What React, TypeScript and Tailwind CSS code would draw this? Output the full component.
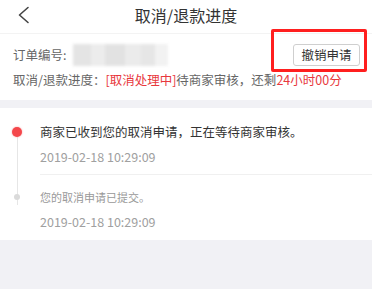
import React from 'react';

const FONT = { fontFamily: '"Noto Sans CJK SC", "Noto Sans", sans-serif' };

export default function App() {
  return (
    <div className="w-[372px] h-[289px] bg-[#f1f1f5] overflow-hidden" style={FONT}>
      {/* Header */}
      <div className="relative h-[34px] bg-white border-b border-[#f3f3f3] flex items-center justify-center">
        <svg className="absolute left-[16px] top-[6px]" width="16" height="18" viewBox="0 0 16 18" fill="none">
          <path d="M12 1.5 L3.5 9 L12 16.5" stroke="#444" strokeWidth="1.6" strokeLinecap="round" strokeLinejoin="round" />
        </svg>
        <span className="text-[16px] text-[#333] leading-none -mt-[4px]">取消/退款进度</span>
      </div>

      {/* Order info */}
      <div className="relative bg-white h-[66px] px-[13px] pt-[11px]">
        <div className="flex items-center h-[20px] text-[12.5px] text-[#666]">
          <span>订单编号:</span>
          <div className="ml-[7px] flex h-[22px] w-[95px] overflow-hidden blur-[1.5px]">
            <div className="w-[18px] bg-[#e4e4e4]" />
            <div className="w-[14px] bg-[#ececec]" />
            <div className="w-[20px] bg-[#e2e2e2]" />
            <div className="w-[16px] bg-[#ebebeb]" />
            <div className="w-[14px] bg-[#e6e6e6]" />
            <div className="w-[13px] bg-[#f2f2f2]" />
          </div>
        </div>
        <div className="mt-[5px] h-[20px] flex items-center text-[12.5px] text-[#666] whitespace-nowrap">
          <span>取消/退款进度： </span>
          <span className="text-[#e8383d]">[取消处理中]</span>
          <span>待商家审核，还剩</span>
          <span className="text-[#e8383d]">24小时00分</span>
        </div>
        <button className="absolute right-[12px] top-[10px] w-[67px] h-[22px] border border-[#cfcfcf] rounded-[3px] bg-white text-[12.5px] text-[#333] flex items-center justify-center">
          撤销申请
        </button>
        <div className="absolute left-[271px] top-[-5px] w-[96px] h-[43px] border-[3px] border-[#ff1f1f] rounded-[2px]" />
      </div>

      {/* Timeline */}
      <div className="relative mt-[8px] bg-white">
        <div className="absolute left-[17px] top-[24px] h-[73px] w-px bg-[#e6e6e6]" />
        <div className="relative pl-[40px]">
          <div className="absolute left-[12px] top-[19px] w-[10px] h-[10px] rounded-full bg-[#f4474b] shadow-[0_0_2px_#f8a0a2]" />
          <div className="pt-[14px] pb-[8px] border-b border-[#f0f0f0]">
            <div className="h-[20px] flex items-center text-[12.5px] text-[#333]">商家已收到您的取消申请，正在等待商家审核。</div>
            <div className="mt-[6px] h-[18px] flex items-center text-[12.5px] text-[#a0a0a0]">2019-02-18 10:29:09</div>
          </div>
        </div>
        <div className="relative pl-[40px]">
          <div className="absolute left-[14px] top-[19px] w-[6px] h-[6px] rounded-full bg-[#dadada]" />
          <div className="pt-[13px] pb-[9px]">
            <div className="h-[18px] flex items-center text-[11px] text-[#999]">您的取消申请已提交。</div>
            <div className="mt-[7px] h-[18px] flex items-center text-[12.5px] text-[#a0a0a0]">2019-02-18 10:29:09</div>
          </div>
        </div>
      </div>
    </div>
  );
}
